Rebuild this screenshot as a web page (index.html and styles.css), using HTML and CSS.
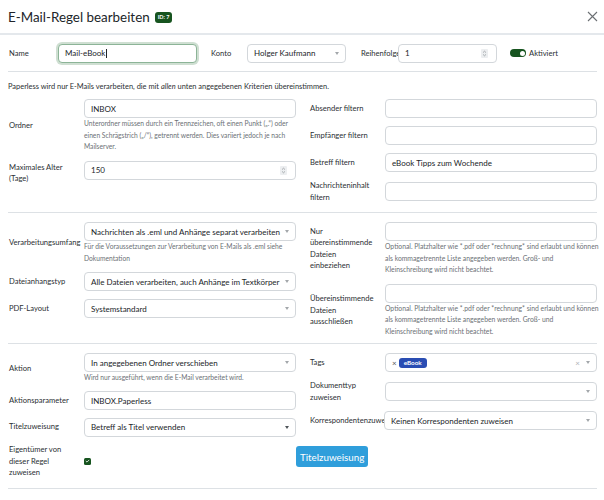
FILE: index.html
```html
<!DOCTYPE html>
<html lang="de">
<head>
<meta charset="utf-8">
<title>E-Mail-Regel bearbeiten</title>
<link rel="stylesheet" href="styles.css">
</head>
<body>
<div class="modal">
  <header class="head">
    <h1 class="title">E-Mail-Regel bearbeiten <span class="badge">ID: 7</span></h1>
    <button class="close" type="button" aria-label="Schließen">
      <svg width="11" height="11" viewBox="0 0 11 11"><path d="M1 1L10 10M10 1L1 10" stroke="#6b6f73" stroke-width="1.1" fill="none"/></svg>
    </button>
  </header>

  <div class="content">
    <div class="toprow">
      <label class="tl tl-name">Name</label>
      <div class="ctl focus w-name"><span>Mail-eBook</span><span class="cursor"></span></div>
      <label class="tl tl-konto">Konto</label>
      <div class="ctl w-konto"><span>Holger Kaufmann</span><i class="arrow"></i></div>
      <label class="tl tl-order">Reihenfolge</label>
      <div class="ctl w-order"><span>1</span><span class="spin"><svg width="5" height="7" viewBox="0 0 5 7"><path d="M1 2.6L2.5 1.2L4 2.6M1 4.4L2.5 5.8L4 4.4" stroke="#8a8f94" stroke-width="0.7" fill="none"/></svg></span></div>
      <span class="switch"><span class="knob"></span></span>
      <span class="switch-label">Aktiviert</span>
    </div>

    <hr class="sep sep-top">
    <p class="note">Paperless wird nur E-Mails verarbeiten, die mit <em>allen</em> unten angegebenen Kriterien übereinstimmen.</p>

    <section class="grid s1">
      <div class="col">
        <div class="row">
          <label class="lbl">Ordner</label>
          <div class="field">
            <div class="ctl"><span>INBOX</span></div>
            <div class="help">Unterordner müssen durch ein Trennzeichen, oft einen Punkt („.“) oder einen Schrägstrich („/“), getrennt werden. Dies variiert jedoch je nach Mailserver.</div>
          </div>
        </div>
        <div class="row">
          <label class="lbl">Maximales Alter (Tage)</label>
          <div class="field field-age">
            <div class="ctl"><span>150</span><span class="spin"><svg width="5" height="7" viewBox="0 0 5 7"><path d="M1 2.6L2.5 1.2L4 2.6M1 4.4L2.5 5.8L4 4.4" stroke="#8a8f94" stroke-width="0.7" fill="none"/></svg></span></div>
          </div>
        </div>
      </div>
      <div class="col">
        <div class="row">
          <label class="lbl">Absender filtern</label>
          <div class="field"><div class="ctl"></div></div>
        </div>
        <div class="row">
          <label class="lbl">Empfänger filtern</label>
          <div class="field"><div class="ctl"></div></div>
        </div>
        <div class="row">
          <label class="lbl">Betreff filtern</label>
          <div class="field"><div class="ctl"><span>eBook Tipps zum Wochende</span></div></div>
        </div>
        <div class="row">
          <label class="lbl">Nachrichteninhalt filtern</label>
          <div class="field"><div class="ctl"></div></div>
        </div>
      </div>
    </section>

    <hr class="sep">

    <section class="grid s2">
      <div class="col">
        <div class="row">
          <label class="lbl nowrap">Verarbeitungsumfang</label>
          <div class="field">
            <div class="ctl"><span>Nachrichten als .eml und Anhänge separat verarbeiten</span><i class="arrow"></i></div>
            <div class="help">Für die Voraussetzungen zur Verarbeitung von E-Mails als .eml siehe Dokumentation</div>
          </div>
        </div>
        <div class="row">
          <label class="lbl">Dateianhangstyp</label>
          <div class="field"><div class="ctl"><span>Alle Dateien verarbeiten, auch Anhänge im Textkörper</span><i class="arrow"></i></div></div>
        </div>
        <div class="row">
          <label class="lbl">PDF-Layout</label>
          <div class="field"><div class="ctl"><span>Systemstandard</span><i class="arrow"></i></div></div>
        </div>
      </div>
      <div class="col">
        <div class="row">
          <label class="lbl">Nur übereinstimmende Dateien einbeziehen</label>
          <div class="field">
            <div class="ctl"></div>
            <div class="help help-r">Optional. Platzhalter wie *.pdf oder *rechnung* sind erlaubt und können<br>als kommagetrennte Liste angegeben werden. Groß- und<br>Kleinschreibung wird nicht beachtet.</div>
          </div>
        </div>
        <div class="row">
          <label class="lbl">Übereinstimmende Dateien ausschließen</label>
          <div class="field">
            <div class="ctl"></div>
            <div class="help help-r">Optional. Platzhalter wie *.pdf oder *rechnung* sind erlaubt und können<br>als kommagetrennte Liste angegeben werden. Groß- und<br>Kleinschreibung wird nicht beachtet.</div>
          </div>
        </div>
      </div>
    </section>

    <hr class="sep">

    <section class="grid s3">
      <div class="col col-tight">
        <div class="row">
          <label class="lbl">Aktion</label>
          <div class="field">
            <div class="ctl"><span>In angegebenen Ordner verschieben</span><i class="arrow"></i></div>
            <div class="help">Wird nur ausgeführt, wenn die E-Mail verarbeitet wird.</div>
          </div>
        </div>
        <div class="row">
          <label class="lbl">Aktionsparameter</label>
          <div class="field"><div class="ctl"><span>INBOX.Paperless</span></div></div>
        </div>
        <div class="row">
          <label class="lbl">Titelzuweisung</label>
          <div class="field"><div class="ctl"><span>Betreff als Titel verwenden</span><i class="arrow dark"></i></div></div>
        </div>
        <div class="row row-owner">
          <label class="lbl">Eigentümer von dieser Regel zuweisen</label>
          <div class="field">
            <span class="check"><svg width="5" height="4" viewBox="0 0 5 4"><path d="M0.8 2L2 3.1L4.2 0.9" stroke="#fff" stroke-width="0.8" fill="none"/></svg></span>
          </div>
        </div>
      </div>
      <div class="col">
        <div class="row">
          <label class="lbl">Tags</label>
          <div class="field">
            <div class="ctl tags"><span class="tag-x">×</span><span class="tag">eBook</span><span class="clear">×</span><i class="arrow"></i></div>
          </div>
        </div>
        <div class="row">
          <label class="lbl">Dokumenttyp zuweisen</label>
          <div class="field"><div class="ctl"><i class="arrow"></i></div></div>
        </div>
        <div class="row">
          <label class="lbl nowrap clip">Korrespondentenzuweisung</label>
          <div class="field"><div class="ctl"><span>Keinen Korrespondenten zuweisen</span><i class="arrow"></i></div></div>
        </div>
        <button class="btn" type="button">Titelzuweisung</button>
      </div>
    </section>

    <hr class="sep">
  </div>
</div>
</body>
</html>
```

FILE: styles.css
```css
* { box-sizing: border-box; }

html, body {
  margin: 0;
  padding: 0;
  background: #fff;
}

body {
  width: 604px;
  height: 500px;
  overflow: hidden;
  font-family: Lato, "Noto Sans", sans-serif;
  font-size: 7.6px;
  color: #2b2f33;
}

.head {
  height: 35px;
  padding: 2px 6px 0 8px;
  border-bottom: 2px solid #e4e8ec;
  display: flex;
  align-items: center;
  justify-content: space-between;
}

.title {
  margin: 0;
  font-size: 13.4px;
  font-weight: 400;
  line-height: 1;
  color: #212529;
  display: flex;
  align-items: center;
  gap: 5px;
}

.badge {
  background: #17541f;
  color: #fff;
  font-size: 5.5px;
  font-weight: 700;
  line-height: 1;
  padding: 2.5px 3px;
  border-radius: 3px;
}

.close {
  border: 0;
  background: none;
  padding: 0;
  margin-top: -2px;
}

.close svg { display: block; }

.content {
  padding: 0 7px 0 8px;
}

/* top row */
.toprow {
  margin-top: 8px;
  height: 20px;
  display: flex;
  align-items: center;
}

.tl {
  white-space: nowrap;
  overflow: hidden;
  padding-left: 1px;
}

.tl-name { width: 50px; }
.tl-konto { width: 37px; margin-left: 13px; }
.tl-order { width: 38px; margin-left: 14px; }

.w-name { width: 139px; height: 20px; }
.w-konto { width: 99px; }
.w-order { width: 99px; }

.ctl.focus {
  border-color: #8cb497;
  box-shadow: 0 0 0 2px #cfdfd2;
}

.cursor {
  width: 0.8px;
  height: 9px;
  background: #212529;
  margin-left: 0.5px;
}

.switch {
  margin-left: 13px;
  width: 16px;
  height: 8px;
  border-radius: 4px;
  background: #17541f;
  display: flex;
  align-items: center;
  justify-content: flex-end;
  padding-right: 1.5px;
}

.knob {
  width: 5px;
  height: 5px;
  border-radius: 50%;
  background: #fff;
}

.switch-label {
  margin-left: 3px;
}

/* separators */
.sep {
  border: 0;
  border-top: 1px solid #dde1e5;
  margin: 0;
}

.sep-top { margin-top: 8px; }

.note {
  margin: 9px 0 7px;
  font-size: 7.45px;
  line-height: 11px;
  color: #2b2f33;
}

/* grid sections */
.grid {
  display: grid;
  grid-template-columns: minmax(0, 1fr) minmax(0, 1fr);
  column-gap: 13px;
}

.s1 { padding-bottom: 9px; }
.s2 { padding: 9px 0 6px; }
.s3 { padding: 9px 0 9px; }

.col {
  display: flex;
  flex-direction: column;
  gap: 8px;
  min-width: 0;
}

.col-tight { gap: 7.5px; }

.row {
  display: flex;
  align-items: center;
}

.lbl {
  flex: 0 0 76px;
  width: 76px;
  padding: 0 12px 0 1px;
  line-height: 11.5px;
}

.nowrap { white-space: nowrap; }
.clip { overflow: hidden; flex-basis: 75px; width: 75px; padding-right: 0; }

.field {
  flex: 1;
  min-width: 0;
}

.field-age { padding-bottom: 6px; }

.ctl {
  height: 19px;
  border: 1px solid #d3d7db;
  border-radius: 4px;
  background: #fff;
  display: flex;
  align-items: center;
  padding: 0 6px;
  white-space: nowrap;
  overflow: hidden;
  font-size: 8px;
  color: #212529;
}

.arrow {
  margin-left: auto;
  flex: none;
  width: 0;
  height: 0;
  border-left: 2.5px solid transparent;
  border-right: 2.5px solid transparent;
  border-top: 3px solid #a3a7ab;
}

.arrow.dark { border-top-color: #50555a; }

.spin {
  margin-left: auto;
  width: 7px;
  height: 9px;
  background: #eceef0;
  border-radius: 1px;
  display: flex;
  align-items: center;
  justify-content: center;
  margin-right: 2px;
}

.help {
  font-size: 6.7px;
  line-height: 11.5px;
  color: #6c7176;
}

.help-r {
  font-size: 6.8px;
  white-space: nowrap;
}

/* tags */
.tags { padding-left: 6px; }

.tag-x {
  color: #555;
  font-size: 8px;
  margin-right: 2px;
}

.tag {
  background: #2a4db3;
  color: #fff;
  font-size: 6.3px;
  font-weight: 700;
  line-height: 10px;
  height: 10px;
  padding: 0 5px;
  border-radius: 3px;
}

.clear {
  margin-left: auto;
  margin-right: 6px;
  color: #b0b4b8;
  font-size: 8px;
}

.tags .arrow { margin-left: 0; }

.check {
  display: flex;
  align-items: center;
  justify-content: center;
  width: 7px;
  height: 7px;
  border-radius: 1.5px;
  background: #17541f;
}

.btn {
  align-self: flex-start;
  margin: 8px 0 0 -13px;
  height: 21px;
  padding: 0 4px;
  border: 0;
  border-radius: 3px;
  background: #2f9edb;
  color: #fff;
  font-family: Lato, "Noto Sans", sans-serif;
  font-size: 9.8px;
}
```
